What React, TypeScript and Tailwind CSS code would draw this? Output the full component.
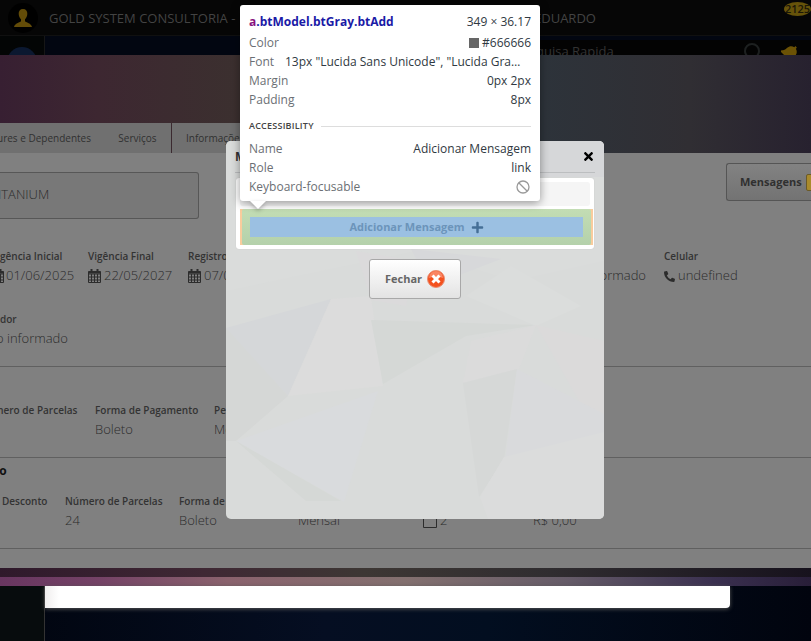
import type { ReactNode } from "react";
import { FaBell, FaPhoneAlt, FaPlus, FaTimes } from "react-icons/fa";

function CalendarIcon() {
  return (
    <svg viewBox="0 0 13 14" className="h-[14px] w-[13px] shrink-0" fill="none" stroke="currentColor">
      <path d="M.5 2.5h12v11h-12zM.5 5h12M.5 8h12M.5 11h12M3.500 5v8.500M6.500 5v8.500M9.500 5v8.500" />
      <path d="M.5 3.500h12" strokeWidth="2" />
      <path d="M3.500 0v3.500M9.500 0v3.500" strokeWidth="2" />
    </svg>
  );
}

function CalendarOutlineIcon() {
  return (
    <svg viewBox="0 0 14 14" className="h-[14px] w-[14px] shrink-0" fill="none" stroke="currentColor">
      <path d="M.5 2.500h13v11h-13z" />
      <path d="M.5 3.500h13M4 0v3M10 0v3" strokeWidth="2" />
    </svg>
  );
}

function PersonIcon() {
  return (
    <svg viewBox="0 0 18 18" className="h-[18px] w-[18px]" fill="#634c08">
      <path d="M9 0c3 0 4.500 2 4.300 5-.2 2.500-1 4-2.300 5.200v1.800c0 1.500 6 1.500 7 6H0c1-4.500 7-4.500 7-6v-1.800C5.700 9 4.900 7.500 4.700 5 4.500 2 6 0 9 0z" />
    </svg>
  );
}

function Field({ label, children }: { label: string; children?: ReactNode }) {
  return (
    <div className="whitespace-nowrap">
      <div className="h-4 text-[10px] leading-4 font-semibold text-[#333]">{label}</div>
      <div className="mt-0.5 flex h-5 items-center gap-[3px] text-[13px] font-light text-[#2c2c2c]">{children}</div>
    </div>
  );
}

function InfoRow({ label, children }: { label: string; children: ReactNode }) {
  return (
    <div className="flex h-[19px] items-center justify-between whitespace-nowrap">
      <dt className="text-[#6b6f74]">{label}</dt>
      <dd className="flex items-center text-[#303942]">{children}</dd>
    </div>
  );
}

function Facets() {
  return (
    <svg viewBox="0 0 378 378" preserveAspectRatio="none" className="absolute inset-0 h-full w-full">
      <rect width="378" height="378" fill="#d9dbda" />
      <path d="M0 0h378v120l-90 20L190 110 0 150z" fill="#dadcdb" />
      <path d="M378 0v36H300L220 0z" fill="#d6d7d9" />
      <path d="M185 108l90 10-70 27z" fill="#d7d8da" />
      <path d="M0 187L105 158 62 255 0 190z" fill="#d5d7d9" />
      <path d="M0 187L62 255 10 300 0 300z" fill="#d5d7d6" />
      <path d="M105 158L145 155 157 245 62 255z" fill="#dcdcdc" />
      <path d="M145 179L310 184 240 195 157 243z" fill="#d5d8d6" />
      <path d="M10 300L152 250 118 361z" fill="#d9dbdd" />
      <path d="M10 300L115 360H80z" fill="#d5d8d6" />
      <path d="M130 110l60 10-10 45-35-6z" fill="#dbdadb" />
      <path d="M285 125l70 40-45 20-70-30z" fill="#dbdddc" />
      <path d="M310 184l68 120V200z" fill="#dbdada" />
      <path d="M245 200L310 184 293 228 237 242z" fill="#dbdbdb" />
      <path d="M237 242l54-14-13 90-25 38z" fill="#d6d8d7" />
      <path d="M291 228l87 45v30l-100 25z" fill="#d9dadc" />
      <path d="M254 356l24-40 100-25v87H262z" fill="#dbdcdc" />
    </svg>
  );
}

function PageHeader() {
  return (
    <header>
      <div className="flex h-9 items-center border-b border-[#101010] bg-[#060606] pl-2">
        <div className="flex h-[30px] w-[30px] items-center justify-center rounded-full bg-black">
          <PersonIcon />
        </div>
        <div className="ml-[11px] flex-1 pt-0.5 text-[13px] whitespace-nowrap text-[#434343]">GOLD SYSTEM CONSULTORIA -</div>
        <div className="w-[250px] pt-0.5 text-[13px] text-[#434343]">EDUARDO</div>
        <div className="mt-0.5 flex h-[14px] w-[27px] shrink-0 items-center justify-center self-start rounded-[50%] bg-[#66530a] text-[11px] font-semibold text-[#1b1708]">
          2125
        </div>
      </div>
      <div className="flex h-[19px] overflow-hidden bg-[#020611]">
        <div className="w-[45px] shrink-0 border-r border-[#161616] bg-[#030505] pt-[11px] pl-[7px]">
          <div className="h-[30px] w-[30px] rounded-full bg-[#0b1830]" />
        </div>
        <div className="flex-1" />
        <div className="mt-1 flex h-6 w-[275px] shrink-0 items-start bg-[#030303] text-[13px] text-[#333]">
          <span className="w-[207px] pt-0.5">quisa Rapida</span>
          <svg viewBox="0 0 18 18" className="mt-[3px] h-[18px] w-[18px]" fill="none" stroke="#1d2020" strokeWidth="2">
            <circle cx="9" cy="8" r="7" />
          </svg>
          <FaBell className="mt-1 ml-5 h-[18px] w-[18px] rotate-45 text-[#6b5205]" />
        </div>
      </div>
    </header>
  );
}

function ClientPanel() {
  return (
    <main className="overflow-hidden">
      <div className="bg-[linear-gradient(90deg,#371f32_0%,#3d2731_12%,#3b302f_30%,#34332f_55%,#2d333a_67%,#302e33_85%,#27212f_100%)] pt-[68px]">
        <nav className="flex h-[30px] w-[320px] text-[10px] text-[#303030]">
          <a href="#dep" className="flex w-[104px] items-center bg-[#707070] whitespace-nowrap"><span className="-ml-[3px]">ures e Dependentes</span></a>
          <a href="#serv" className="flex w-[68px] items-center justify-center border-r border-[#3b2a30] bg-[#707070]">Serviços</a>
          <a href="#info" className="flex flex-1 items-center bg-[#707070] pl-[14px]">Informações</a>
        </nav>
      </div>
      <div className="bg-[#808080]">
        <div className="flex h-[95px] items-start justify-between">
          <div className="mt-[19px] flex h-[47px] w-[199px] items-center rounded-r-[3px] border border-l-0 border-[#575757] bg-[#787878] pb-0.5 text-[13px] font-light text-[#2c2c2c]">
            <span className="-ml-0.5">ITANIUM</span>
          </div>
          <button className="mt-[10px] flex h-[38px] w-[85px] items-center gap-1 overflow-hidden rounded-l-[3px] border border-r-0 border-[#555] bg-linear-to-b from-[#828282] to-[#737373] pl-[13px] text-[11px] font-bold text-[#303030]">
            Mensagens
            <span className="h-[17px] w-3 shrink-0 rounded-xs border border-[#6b5a28] bg-[#a98a2c]" />
          </button>
        </div>
        <div className="grid h-[63px] grid-cols-[88px_100px_396px_80px_1fr]">
          <Field label="gência Inicial">
            <span className="-ml-[9px] flex items-center gap-0.5"><CalendarIcon />01/06/2025</span>
          </Field>
          <Field label="Vigência Final"><CalendarIcon />22/05/2027</Field>
          <Field label="Registro"><CalendarIcon />07/05/2025</Field>
          <Field label=""><span className="w-[62px] text-right">informado</span></Field>
          <Field label="Celular"><FaPhoneAlt className="h-[11px] w-[11px]" />undefined</Field>
        </div>
        <div className="h-[55px]"><Field label="dor"><span className="-ml-1">o informado</span></Field></div>
        <div className="h-[92px] border-y border-[#606060] pt-[35px]">
          <div className="grid grid-cols-[95px_119px_1fr]">
            <div className="-ml-1.5"><Field label="mero de Parcelas" /></div>
            <Field label="Forma de Pagamento">Boleto</Field>
            <Field label="Periodicidade">Mensal</Field>
          </div>
        </div>
        <div className="h-[91px] border-b border-[#606060] pt-[4px]">
          <h2 className="-ml-2 h-[31px] text-[12px] font-bold text-[#111]">ão</h2>
          <div className="grid grid-cols-[65px_114px_119px_125px_110px_1fr]">
            <div className="pl-0.5"><Field label="Desconto" /></div>
            <Field label="Número de Parcelas">24</Field>
            <Field label="Forma de Pagamento">Boleto</Field>
            <Field label="">Mensal</Field>
            <Field label=""><CalendarOutlineIcon />2</Field>
            <Field label="">R$ 0,00</Field>
          </div>
        </div>
        <div className="h-[19px]" />
      </div>
      <div className="h-[9px] bg-[linear-gradient(90deg,#2f192b,#3f2834_25%,#3d3734_45%,#302d30_68%,#17121d)]" />
      <div className="h-[9px] bg-[linear-gradient(90deg,#683660,#744266_12%,#8a626d_28%,#83706f_50%,#655b68_70%,#3a3050_88%,#281e38)]" />
    </main>
  );
}

function MessagesDialog() {
  return (
    <section role="dialog" aria-label="Mensagens" className="absolute top-[141px] left-[226px] h-[378px] w-[378px] overflow-hidden rounded-[5px]">
      <Facets />
      <div className="relative flex h-full flex-col items-center px-[9px]">
        <div className="flex h-8 w-full shrink-0 items-center justify-between border-b border-[#bcbec0]">
          <h2 className="text-[12px] font-bold text-[#333]">Mensagens</h2>
          <button aria-label="Fechar janela" className="text-[13px] text-black"><FaTimes /></button>
        </div>
        <div className="mt-[5px] h-[71px] w-[358px] shrink-0 rounded-[3px] bg-white p-1 shadow-[0_0_1px_#bbb]">
          <div className="h-6 rounded-[3px] bg-[#f5f5f5]" />
          <div className="mt-[3px] w-[353px] bg-[#f9cc9d] px-0.5">
            <a href="#add" className="block h-9 rounded-xs bg-linear-to-b from-[#c3ddb4] to-[#b4d1ab] p-2">
              <span className="flex h-5 items-center justify-center gap-1.5 bg-[#9bc0e2] text-[11px] font-bold text-[#6c94ba]">
                Adicionar Mensagem
                <FaPlus className="h-[13px] w-[13px] text-[#456f96]" />
              </span>
            </a>
          </div>
        </div>
        <button className="mt-[10px] flex h-10 w-[92px] shrink-0 items-center justify-center gap-[5px] rounded-[3px] border border-[#a8a8a8] bg-linear-to-b from-white to-[#e3e3e3] text-[11px] font-bold text-[#666]">
          Fechar
          <svg viewBox="0 0 18 18" className="h-[18px] w-[18px]">
            <circle cx="9" cy="9" r="8.500" fill="#f4511e" stroke="#e88e73" />
            <path d="M2 8a7 7 0 0 1 14 0q-7-3-14 0z" fill="#fa8563" />
            <path d="M5.500 5.500l7 7M12.500 5.500l-7 7" stroke="#fff" strokeWidth="3" />
          </svg>
        </button>
      </div>
    </section>
  );
}

function InspectorTooltip() {
  return (
    <aside className="absolute top-[5px] left-[240px] h-[196px] w-[300px] rounded-[3px] bg-white px-[9px] pt-[5px] text-[12px] shadow-[0_2px_10px_rgba(0,0,0,0.4)]">
      <div className="flex h-[23px] items-center justify-between whitespace-nowrap">
        <strong className="text-[#1a1aa6]"><span className="text-[#881280]">a</span>.btModel.btGray.btAdd</strong>
        <span className="text-[#303942]">349 × 36.17</span>
      </div>
      <dl>
        <InfoRow label="Color"><span className="mr-[3px] h-[10px] w-[10px] bg-[#666]" />#666666</InfoRow>
        <InfoRow label="Font"><span className="w-[246px]">13px "Lucida Sans Unicode", "Lucida Gra…</span></InfoRow>
        <InfoRow label="Margin">0px 2px</InfoRow>
        <InfoRow label="Padding">8px</InfoRow>
      </dl>
      <div className="flex h-[30px] items-center gap-[7px] pt-1 text-[9px] font-semibold tracking-wide text-[#444]">
        ACCESSIBILITY
        <span className="h-px flex-1 bg-[#ddd]" />
      </div>
      <dl>
        <InfoRow label="Name">Adicionar Mensagem</InfoRow>
        <InfoRow label="Role">link</InfoRow>
        <InfoRow label="Keyboard-focusable">
          <svg viewBox="0 0 14 14" className="mr-px h-[14px] w-[14px]" fill="none" stroke="#999" strokeWidth="1.300">
            <circle cx="7" cy="7" r="6" />
            <path d="M3 3l8 8" />
          </svg>
        </InfoRow>
      </dl>
      <svg viewBox="0 0 16 8" className="absolute top-full left-[10px] h-2 w-4 drop-shadow-[0_2px_2px_rgba(0,0,0,0.3)]" fill="#fff"><path d="M0 0h16L8 8z" /></svg>
    </aside>
  );
}

export default function App() {
  return (
    <div className="relative min-h-screen overflow-hidden bg-[#020a1a] font-['Open_Sans','Noto_Sans',sans-serif]">
      <PageHeader />
      <ClientPanel />
      <footer className="flex h-[55px] bg-[linear-gradient(90deg,#01050f,#050e22_40%,#020e20_60%,#01040e)]">
        <div className="w-[45px] border-r border-[#333] bg-[#070c0d]" />
        <div className="mr-[81px] h-[22px] flex-1 rounded-br-[4px] bg-[linear-gradient(90deg,#f0eeee,#fff_14px)] shadow-[0_1px_4px_#555]" />
      </footer>
      <MessagesDialog />
      <InspectorTooltip />
    </div>
  );
}
